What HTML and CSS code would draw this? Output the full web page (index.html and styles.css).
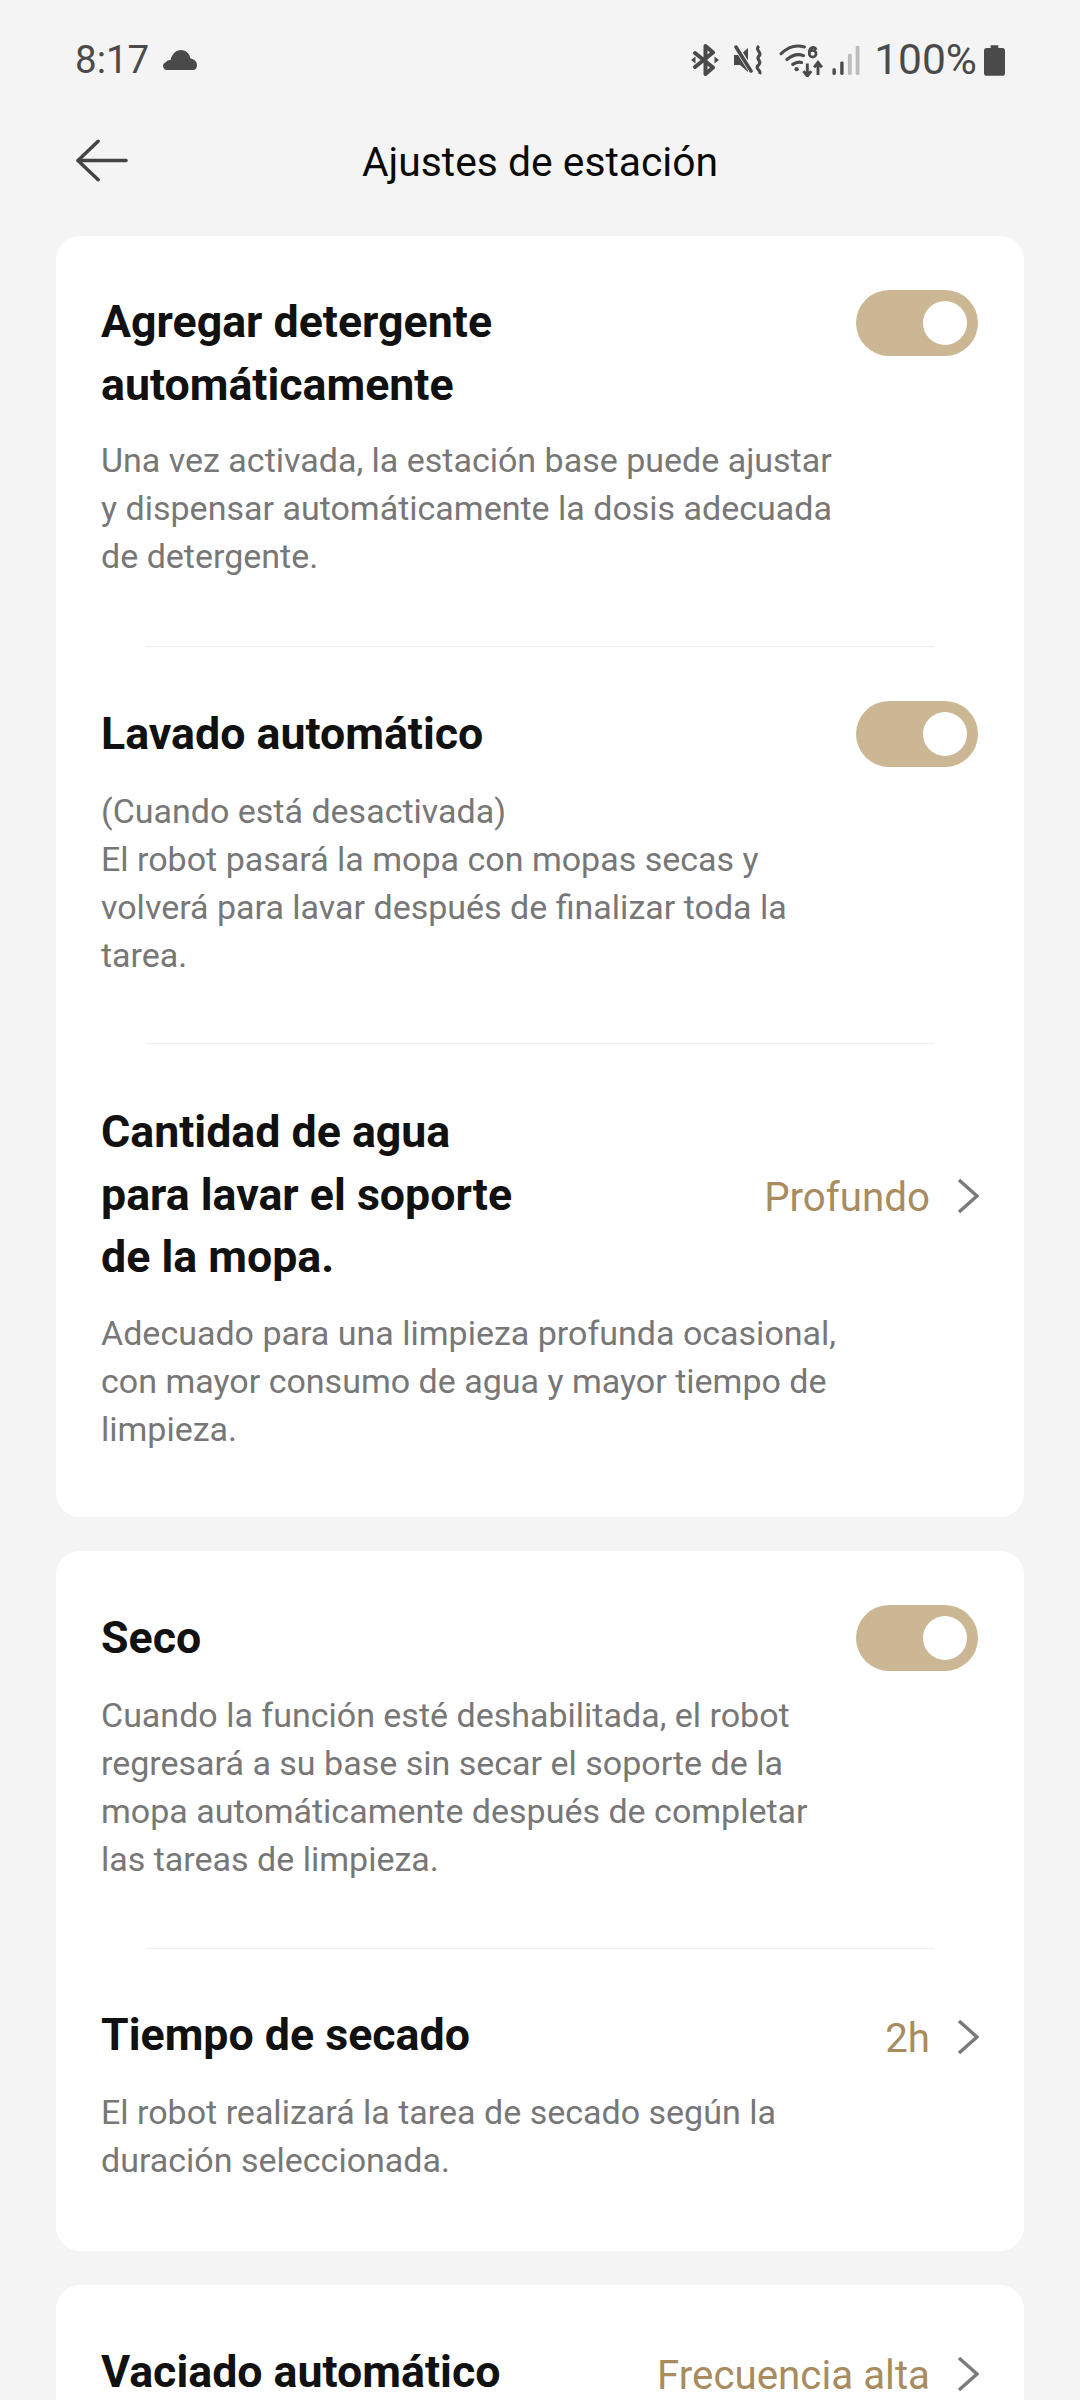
FILE: index.html
```html
<!DOCTYPE html>
<html lang="es">
<head>
<meta charset="utf-8">
<title>Ajustes de estación</title>
<link rel="stylesheet" href="styles.css">
</head>
<body>
<div class="screen">
  <div class="status">
    <div class="status-left">
      <span class="time">8:17</span>
      <svg class="cloud" viewBox="0 0 36 22"><path d="M5 21a4 4 0 0 1-1.200-7.800C5 11.500 7 10.800 8.500 11 10 5 14 1 19 1c5 0 8.500 3.500 9.500 8.500 3.500.5 6.500 3 6.500 6.500 0 3-1.500 5-4 5z" fill="#4a4a4a"/></svg>
    </div>
    <div class="status-right">
      <svg class="ic-bt" viewBox="0 0 28 32"><path d="M4 9l18 14.500-7.500 6.500V2L22 8.500 4 23" fill="none" stroke="#4a4a4a" stroke-width="4" stroke-linejoin="round" stroke-linecap="round"/><path d="M0 16l4.500-3.500v7zM28 16l-4.500-3.500v7z" fill="#4a4a4a"/></svg>
      <svg class="ic-mute" viewBox="0 0 30 30"><path d="M0 10h6l8-7v24l-8-7H0z" fill="#4a4a4a"/><path d="M1 0l17 27" stroke="#f4f4f4" stroke-width="5.500"/><path d="M2 2l15 24" stroke="#4a4a4a" stroke-width="3.500" stroke-linecap="round"/><path d="M25 1c-5 4 4 6.500 0 10s4 5-.5 9 3.500 5 1 9" fill="none" stroke="#4a4a4a" stroke-width="3.200"/></svg>
      <svg class="ic-wifi" viewBox="0 0 46 34"><path d="M2 10C10 2 19 1 26 3M8 16c6-5 12-6 17-4M14 21c3-2 6-3 9-2" fill="none" stroke="#4a4a4a" stroke-width="3.200" stroke-linecap="round"/><circle cx="18" cy="26" r="2.200" fill="#4a4a4a"/><path d="M31 9c0-6 6-7 7-3M31 10a3.500 3.500 0 1 0 7 0a3.500 3.500 0 1 0-7 0" fill="none" stroke="#4a4a4a" stroke-width="2.800"/><path d="M29 20v12M25 28l4 5 4-5M40 32V20M36 24l4-5 4 5" fill="none" stroke="#4a4a4a" stroke-width="3"/></svg>
      <svg class="ic-signal" viewBox="0 0 28 30"><rect x="0" y="23" width="3.500" height="7" rx="1.500" fill="#4a4a4a"/><rect x="8" y="16" width="3.500" height="14" rx="1.500" fill="#4a4a4a"/><rect x="16" y="8" width="4" height="22" rx="1.500" fill="#bdbdbd"/><rect x="24" y="0" width="4" height="30" rx="1.500" fill="#bdbdbd"/></svg>
      <span class="pct">100%</span>
      <svg class="ic-batt" viewBox="0 0 22 32"><path d="M7 0h8v3h4a3 3 0 0 1 3 3v23a3 3 0 0 1-3 3H3a3 3 0 0 1-3-3V6a3 3 0 0 1 3-3h4z" fill="#4a4a4a"/></svg>
    </div>
  </div>
  <div class="appbar">
    <svg class="back" viewBox="0 0 54 44"><path d="M52 22H2M23 2L2 22l21 20" fill="none" stroke="#444" stroke-width="3.600" stroke-linecap="round" stroke-linejoin="round"/></svg>
    <h1 class="page-title">Ajustes de estación</h1>
  </div>

  <section class="card">
    <div class="item item-detergent">
      <div class="row">
        <h2 class="item-title">Agregar detergente<br>automáticamente</h2>
        <span class="switch switch-top"><span class="knob"></span></span>
      </div>
      <p class="desc">Una vez activada, la estación base puede ajustar<br>y dispensar automáticamente la dosis adecuada<br>de detergente.</p>
    </div>
    <div class="item item-wash">
      <div class="row row-center">
        <h2 class="item-title">Lavado automático</h2>
        <span class="switch"><span class="knob"></span></span>
      </div>
      <p class="desc">(Cuando está desactivada)<br>El robot pasará la mopa con mopas secas y<br>volverá para lavar después de finalizar toda la<br>tarea.</p>
    </div>
    <div class="item item-water">
      <div class="row row-center">
        <h2 class="item-title">Cantidad de agua<br>para lavar el soporte<br>de la mopa.</h2>
        <div class="value"><span>Profundo</span><svg class="chev" viewBox="0 0 22 36"><path d="M2 2l18 16L2 34" fill="none" stroke="#7a7a7a" stroke-width="3.400"/></svg></div>
      </div>
      <p class="desc">Adecuado para una limpieza profunda ocasional,<br>con mayor consumo de agua y mayor tiempo de<br>limpieza.</p>
    </div>
  </section>

  <section class="card">
    <div class="item item-dry">
      <div class="row row-center">
        <h2 class="item-title">Seco</h2>
        <span class="switch"><span class="knob"></span></span>
      </div>
      <p class="desc">Cuando la función esté deshabilitada, el robot<br>regresará a su base sin secar el soporte de la<br>mopa automáticamente después de completar<br>las tareas de limpieza.</p>
    </div>
    <div class="item item-time">
      <div class="row row-center">
        <h2 class="item-title">Tiempo de secado</h2>
        <div class="value"><span>2h</span><svg class="chev" viewBox="0 0 22 36"><path d="M2 2l18 16L2 34" fill="none" stroke="#7a7a7a" stroke-width="3.400"/></svg></div>
      </div>
      <p class="desc">El robot realizará la tarea de secado según la<br>duración seleccionada.</p>
    </div>
  </section>

  <section class="card">
    <div class="item item-time">
      <div class="row row-center">
        <h2 class="item-title">Vaciado automático</h2>
        <div class="value"><span>Frecuencia alta</span><svg class="chev" viewBox="0 0 22 36"><path d="M2 2l18 16L2 34" fill="none" stroke="#7a7a7a" stroke-width="3.400"/></svg></div>
      </div>
    </div>
  </section>
</div>
</body>
</html>
```
FILE: styles.css
```css
* { box-sizing: border-box; }
html, body { margin: 0; padding: 0; background: #f4f4f4; }
body { font-family: Roboto, "Noto Sans", sans-serif; }
.screen { width: 1080px; height: 2400px; overflow: hidden; background: #f4f4f4; }

.status { height: 120px; padding: 38px 75px 0 75px; display: flex; justify-content: space-between; align-items: flex-start; color: #4a4a4a; }
.status-left, .status-right { display: flex; align-items: center; height: 44px; }
.time { font-size: 38.500px; line-height: 44px; }
.cloud { width: 36px; height: 22px; margin-left: 13px; }
.ic-bt { width: 28px; height: 32px; }
.ic-mute { width: 30px; height: 30px; margin-left: 15px; }
.ic-wifi { width: 45px; height: 33px; margin-left: 15px; }
.ic-signal { width: 28px; height: 29px; margin-left: 8px; }
.pct { font-size: 42.500px; line-height: 44px; margin-left: 14px; }
.ic-batt { width: 21px; height: 31px; margin-left: 7px; }

.appbar { height: 116px; position: relative; display: flex; align-items: center; justify-content: center; padding-bottom: 32px; }
.back { position: absolute; left: 76px; top: 19px; width: 52px; height: 43px; }
.page-title { margin: 0; font-size: 40.800px; line-height: 60px; font-weight: 400; color: #0a0a0a; }

.card { margin: 0 56px 34px; background: #fff; border-radius: 24px; padding: 0 45px; }
.item { position: relative; }
.item + .item::before { content: ""; position: absolute; top: 0; left: 45px; right: 45px; height: 1px; background: #eeeeee; }
.item-detergent { padding: 55px 0 66px; }
.item-wash { padding: 55px 0 64px; }
.item-water { padding: 58px 0 64.500px; }
.item-dry { padding: 54px 0 65px; }
.item-time { padding: 54px 0 67px; }
.row { display: flex; justify-content: space-between; align-items: flex-start; min-height: 66px; }
.row-center { align-items: center; }
.item-title { margin: 0; font-size: 44.700px; line-height: 62.500px; font-weight: 700; color: #111; }
.desc { margin: 20px 0 0; font-size: 34px; line-height: 48px; color: #777; }
.switch { width: 122px; height: 66px; margin-right: 1px; border-radius: 33px; background: #cbb793; display: flex; align-items: center; justify-content: flex-end; padding-right: 11px; flex: none; }
.switch-top { margin-top: -1.500px; }
.knob { width: 44px; height: 44px; border-radius: 50%; background: #fff; }
.value { display: flex; align-items: center; font-size: 40.300px; color: #a88c5f; margin-top: 3px; }
.value span { padding-top: 3px; }
.chev { width: 22px; height: 36px; margin-left: 27px; }
```
